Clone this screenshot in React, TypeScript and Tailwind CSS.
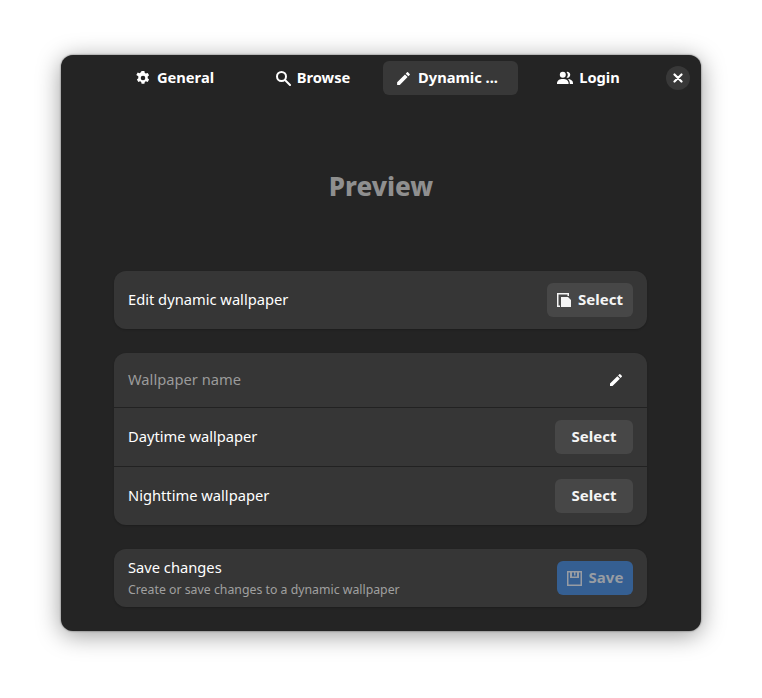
import React from "react";

const font = "font-['Noto_Sans',sans-serif]";

const GearIcon = () => (
  <svg width="16" height="16" viewBox="0 0 16 16" fill="currentColor">
    <path
      fillRule="evenodd"
      d="M6.6 1h2.8l.4 1.900 1.100.6 1.800-.6 1.400 2.400-1.400 1.300v1.600l1.400 1.300-1.400 2.400-1.800-.6-1.100.6-.4 1.900H6.600l-.4-1.900-1.100-.6-1.800.6-1.400-2.400 1.400-1.300V6.300L1.300 5l1.400-2.400 1.800.6 1.100-.6zM8 5.700a2.300 2.300 0 1 0 0 4.600 2.300 2.300 0 0 0 0-4.600z"
    />
  </svg>
);

const SearchIcon = () => (
  <svg width="16" height="16" viewBox="0 0 16 16" fill="none" stroke="currentColor" strokeWidth="2">
    <circle cx="6.500" cy="6.500" r="4.500" />
    <path d="M10 10l5 5" strokeLinecap="round" />
  </svg>
);

const PencilIcon = ({ size = 17 }: { size?: number }) => (
  <svg width={size} height={size} viewBox="0 0 24 24" fill="currentColor">
    <path d="M3 17.250V21h3.750L17.810 9.940l-3.750-3.750L3 17.250zM20.710 7.040a1 1 0 0 0 0-1.410l-2.340-2.340a1 1 0 0 0-1.410 0l-1.830 1.830 3.750 3.750 1.830-1.830z" />
  </svg>
);

const PeopleIcon = () => (
  <svg width="16" height="16" viewBox="0 0 16 16" fill="currentColor">
    <circle cx="5.800" cy="4.800" r="3" />
    <path d="M0 13.200c0-2.700 2.500-4.200 5.800-4.200s5.800 1.500 5.800 4.200V14H0z" />
    <path d="M9.500 1.900a3 3 0 1 1 0 5.800 4.300 4.300 0 0 0 0-5.800zM10.800 9.100c2.900.2 5.200 1.500 5.200 4V14h-3.200v-.8c0-1.700-.8-3.100-2-4.100z" />
  </svg>
);

const SelectIcon = () => (
  <svg width="14" height="14" viewBox="0 0 14 14" fill="currentColor">
    <path d="M0 0h12v3h-1.500V1.500h-9v11H3V14H0z" />
    <path d="M4 4h7l3 3v7H4z" />
  </svg>
);

const SaveIcon = () => (
  <svg width="15" height="15" viewBox="0 0 15 15" fill="currentColor">
    <path
      fillRule="evenodd"
      d="M0 0h15v15H0zM1.500 1.500v12h12v-12h-1.500V7H3V1.500zM5 1.500V5.500h5V1.500H8.500V4.500H7V1.500z"
    />
  </svg>
);

const Tab = ({ icon, label, active }: { icon: React.ReactNode; label: string; active?: boolean }) => (
  <div
    className={`flex h-[34px] w-[135px] items-center justify-center gap-[6px] rounded-md text-[14.700px] font-bold ${
      active ? "bg-[#383838] pr-[8px]" : ""
    }`}
  >
    {icon}
    <span className="-translate-y-px">{label}</span>
  </div>
);

const SelectButton = () => (
  <button className="h-[34px] w-[78px] rounded-md bg-[#474747] text-[15px] font-bold text-[#f4f4f4]">
    <span className="relative -top-px">Select</span>
  </button>
);

const Label = ({ children, muted }: { children: React.ReactNode; muted?: boolean }) => (
  <span className={`-translate-y-px text-[14.700px] ${muted ? "text-[#9b9b9b]" : ""}`}>{children}</span>
);

const App = () => {
  return (
    <div className={`h-[698px] w-[762px] overflow-hidden bg-white pl-[61px] pt-[55px] ${font}`}>
      <div className="flex h-[576px] w-[640px] flex-col rounded-[12px] bg-[#242424] text-white shadow-[0_4px_24px_rgba(0,0,0,0.4),0_0_2px_rgba(0,0,0,0.6)]">
        <div className="flex items-start pl-[46px] pt-[6px]">
          <div className="flex gap-[3px]">
            <Tab icon={<GearIcon />} label="General" />
            <Tab icon={<SearchIcon />} label="Browse" />
            <Tab icon={<PencilIcon />} label="Dynamic ..." active />
            <Tab icon={<PeopleIcon />} label="Login" />
          </div>
          <div className="ml-[10px] mt-[5px] flex h-[24px] w-[24px] items-center justify-center rounded-full bg-[#383838]">
            <svg width="10" height="10" viewBox="0 0 10 10" stroke="currentColor" strokeWidth="2.200" strokeLinecap="round">
              <path d="M1.500 1.500l7 7M8.500 1.500l-7 7" />
            </svg>
          </div>
        </div>

        <div className="flex h-[176px] items-center justify-center pt-[6px]">
          <h1 className="text-[26px] font-extrabold text-[#8f8f8f]">Preview</h1>
        </div>

        <div className="flex flex-col gap-[24px] pl-[53px] pr-[54px]">
          <div className="flex h-[58px] items-center justify-between rounded-xl bg-[#363636] px-[14px] shadow-[0_1px_2px_rgba(0,0,0,0.2)]">
            <Label>Edit dynamic wallpaper</Label>
            <button className="flex h-[34px] w-[86px] items-center justify-center gap-[7px] rounded-md bg-[#474747] text-[15px] font-bold text-[#f4f4f4]">
              <SelectIcon />
              <span className="-translate-y-px">Select</span>
            </button>
          </div>

          <div className="flex flex-col rounded-xl bg-[#363636] shadow-[0_1px_2px_rgba(0,0,0,0.2)]">
            <div className="flex h-[55px] items-center justify-between border-b border-[#222222] pl-[14px] pr-[23px]">
              <Label muted>Wallpaper name</Label>
              <PencilIcon size={16} />
            </div>
            <div className="flex h-[59px] items-center justify-between border-b border-[#222222] px-[14px]">
              <Label>Daytime wallpaper</Label>
              <SelectButton />
            </div>
            <div className="flex h-[58px] items-center justify-between px-[14px]">
              <Label>Nighttime wallpaper</Label>
              <SelectButton />
            </div>
          </div>

          <div className="flex h-[58px] items-center justify-between rounded-xl bg-[#363636] px-[14px] shadow-[0_1px_2px_rgba(0,0,0,0.2)]">
            <div className="flex flex-col">
              <span className="-translate-y-px text-[14.700px] leading-[20px]">Save changes</span>
              <span className="mt-[3px] text-[12.300px] leading-[17px] text-[#a0a0a0]">
                Create or save changes to a dynamic wallpaper
              </span>
            </div>
            <button className="flex h-[34px] w-[76px] items-center justify-center gap-[7px] rounded-md bg-[#355f92] text-[15px] font-bold text-[#979ca3]">
              <SaveIcon />
              <span className="-translate-y-px">Save</span>
            </button>
          </div>
        </div>
      </div>
    </div>
  );
};

export default App;
